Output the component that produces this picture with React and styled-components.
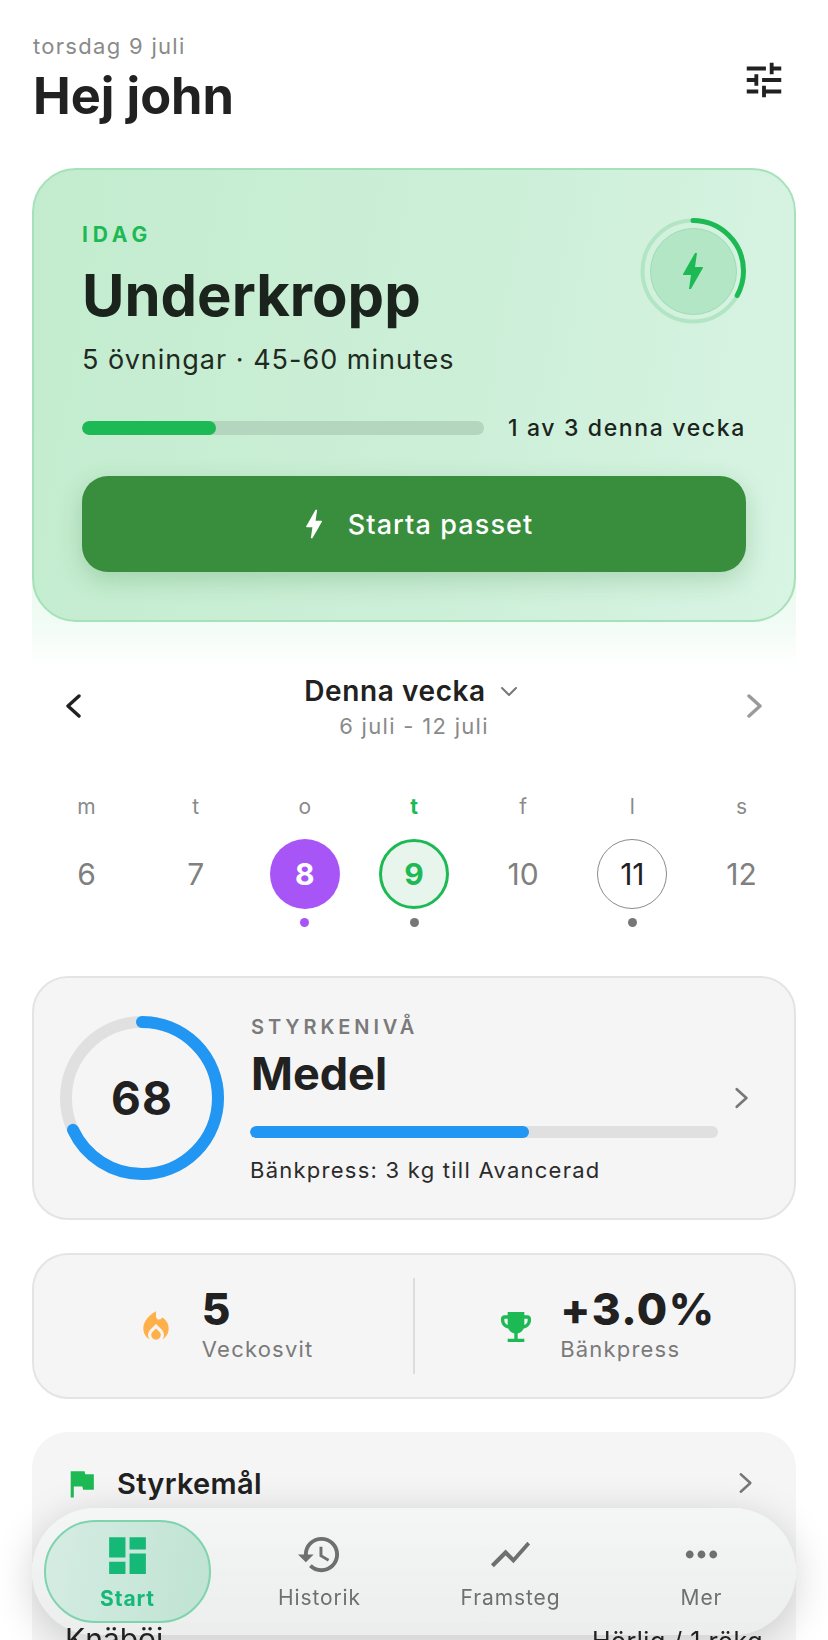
import React from 'react'
import styled, { createGlobalStyle } from 'styled-components'
import {
  MdTune,
  MdBolt,
  MdLocalFireDepartment,
  MdEmojiEvents,
  MdFlag,
  MdDashboard,
  MdHistory,
  MdShowChart,
  MdMoreHoriz,
} from 'react-icons/md'

const GlobalStyle = createGlobalStyle`
  html, body {
    margin: 0;
    padding: 0;
    background: #ffffff;
    font-family: Inter, "Noto Sans", sans-serif;
    color: #212121;
  }
  * {
    box-sizing: border-box;
  }
`

const Screen = styled.div`
  position: relative;
  isolation: isolate;
  width: 828px;
  height: 1640px;
  overflow: hidden;
  background: #ffffff;
`

const Content = styled.div`
  display: flex;
  flex-direction: column;
  padding: 33px 32px 0;
`

const Header = styled.header`
  display: flex;
  justify-content: space-between;
  align-items: flex-start;
  height: 135px;
  padding-left: 1px;
`

const DateLabel = styled.div`
  font-size: 22px;
  line-height: 26px;
  letter-spacing: 1.3px;
  color: #8a8a8a;
`

const Greeting = styled.h1`
  margin: 8px 0 0;
  font-size: 50.5px;
  line-height: 58px;
  font-weight: 700;
  color: #212121;
`

const SettingsButton = styled.div`
  display: flex;
  margin: 24px 9px 0 0;
  font-size: 46px;
  color: #212121;
`

const HeroCard = styled.section`
  position: relative;
  padding: 48px 48px 0;
  height: 454px;
  border: 2px solid #a6e1ba;
  border-radius: 44px;
  background: linear-gradient(100deg, #c3ecce 0%, #ccefd8 55%, #d8f4e3 100%);

  /* soft green glow that fades out under the card */
  &::after {
    content: '';
    position: absolute;
    z-index: -1;
    left: -2px;
    right: -2px;
    bottom: -50px;
    height: 100px;
    background: linear-gradient(180deg, #e9f8ee 0%, #f1fbf5 50%, #ffffff 100%);
  }
`

const HeroTop = styled.div`
  display: flex;
  justify-content: space-between;
  align-items: flex-start;
  height: 155px;
`

const Eyebrow = styled.div`
  margin-top: 5px;
  font-size: 21px;
  line-height: 24px;
  font-weight: 700;
  letter-spacing: 4.8px;
  color: #1db954;
`

const HeroTitle = styled.h2`
  margin: 15px 0 0;
  font-size: 58px;
  line-height: 66px;
  font-weight: 700;
  color: #1a241d;
`

const HeroMeta = styled.div`
  margin-top: 15px;
  font-size: 27px;
  line-height: 34px;
  letter-spacing: 1px;
  color: #1f2a22;
`

const RingBox = styled.div`
  position: relative;
  width: 106px;
  height: 106px;
  display: flex;
  align-items: center;
  justify-content: center;
`

const RingSvg = styled.svg`
  position: absolute;
  inset: 0;
`

const RingCore = styled.div`
  width: 87px;
  height: 87px;
  border-radius: 50%;
  display: flex;
  align-items: center;
  justify-content: center;
  background: #b3e6c4;
  border: 1.5px solid #9fdcb4;
  color: #1db954;
  font-size: 48px;
`

const ProgressRow = styled.div`
  display: flex;
  align-items: center;
  gap: 24px;
  margin-top: 41px;
`

const HeroTrack = styled.div`
  flex: 1;
  height: 14px;
  border-radius: 7px;
  background: #b4d6bf;
  overflow: hidden;
`

const BarFill = styled.div`
  height: 100%;
  border-radius: inherit;
  background: ${p => p.$color};
`

const ProgressText = styled.div`
  font-size: 23px;
  line-height: 28px;
  font-weight: 500;
  letter-spacing: 1.65px;
  color: #1a241d;
  white-space: nowrap;
`

const StartButton = styled.div`
  display: flex;
  align-items: center;
  justify-content: center;
  gap: 15px;
  height: 96px;
  margin-top: 34px;
  border-radius: 26px;
  background: #388e3c;
  color: #ffffff;
  font-size: 27px;
  font-weight: 500;
  letter-spacing: 1.1px;
  box-shadow: 0 8px 24px rgba(46, 125, 50, 0.24);

  svg {
    font-size: 38px;
  }
`

const WeekHead = styled.div`
  display: grid;
  grid-template-columns: 1fr auto 1fr;
  align-items: center;
  margin-top: 51px;
  padding: 0 33px;
`

const ArrowSvg = styled.svg`
  display: block;
  flex: none;
  justify-self: ${p => (p.$right ? 'end' : 'start')};
`

const WeekCenter = styled.div`
  display: flex;
  flex-direction: column;
  align-items: center;
`

const WeekTitle = styled.div`
  display: flex;
  align-items: center;
  gap: 14px;
  margin-right: 6px;
  font-size: 28px;
  line-height: 36px;
  font-weight: 600;
  letter-spacing: 0.6px;
  color: #212121;
`

const WeekRange = styled.div`
  margin-top: 4px;
  font-size: 22px;
  line-height: 26px;
  letter-spacing: 1.3px;
  color: #8a8a8a;
`

const DayGrid = styled.div`
  display: grid;
  grid-template-columns: repeat(7, 109.2px);
  justify-content: center;
  margin-top: 55px;
`

const DayColumn = styled.div`
  display: flex;
  flex-direction: column;
  align-items: center;
`

const DayLetter = styled.div`
  font-size: 21px;
  line-height: 26px;
  font-weight: ${p => (p.$today ? 700 : 400)};
  color: ${p => (p.$today ? '#1db954' : '#8a8a8a')};
`

const DayCircle = styled.div`
  width: 70px;
  height: 70px;
  margin-top: 19px;
  border-radius: 50%;
  display: flex;
  align-items: center;
  justify-content: center;
  font-size: 30px;
  font-weight: ${p => (p.$variant === 'done' || p.$variant === 'today' ? 700 : 400)};
  color: ${p => ({ done: '#ffffff', today: '#1db954', planned: '#212121' }[p.$variant] || '#808080')};
  background: ${p => ({ done: '#a855f7', today: '#e8f5ec' }[p.$variant] || 'transparent')};
  border: ${p =>
    ({ today: '3px solid #1db954', planned: '1.5px solid #8a8a8a' }[p.$variant] || 'none')};
`

const DayDot = styled.div`
  width: 9px;
  height: 9px;
  margin-top: 9px;
  border-radius: 50%;
  background: ${p => p.$color || 'transparent'};
`

const Card = styled.section`
  display: flex;
  align-items: center;
  border: 2px solid #e4e4e4;
  border-radius: 36px;
  background: #f5f5f5;
`

const LevelCard = styled(Card)`
  height: 244px;
  margin-top: 49px;
  padding: 0 45px 0 26px;
`

const ScoreRing = styled.div`
  position: relative;
  flex: none;
  width: 164px;
  height: 164px;
  display: flex;
  align-items: center;
  justify-content: center;
  font-size: 46px;
  font-weight: 700;
  letter-spacing: 1px;
  color: #212121;

  svg {
    position: absolute;
    inset: 0;
  }
`

const LevelInfo = styled.div`
  flex: 1;
  margin-left: 26px;
  margin-right: 17px;
  padding-top: 3px;
  min-width: 0;
`

const LevelLabel = styled.div`
  margin-left: 1px;
  font-size: 20px;
  line-height: 24px;
  font-weight: 600;
  letter-spacing: 3.9px;
  color: #7a7a7a;
`

const LevelName = styled.div`
  margin-top: 8px;
  margin-left: 1px;
  font-size: 45px;
  line-height: 54px;
  font-weight: 700;
  color: #212121;
`

const LevelTrack = styled.div`
  height: 12px;
  margin-top: 25px;
  border-radius: 6px;
  background: #e0e0e0;
  overflow: hidden;
`

const LevelNote = styled.div`
  margin-top: 18px;
  font-size: 22px;
  line-height: 28px;
  letter-spacing: 1.25px;
  color: #2b2b2b;
`

const StatsCard = styled(Card)`
  height: 146px;
  margin-top: 33px;
`

const StatCell = styled.div`
  flex: 1;
  display: flex;
  align-items: center;
  justify-content: center;
  gap: ${p => p.$gap}px;
  margin-left: ${p => p.$shift}px;
`

const StatIcon = styled.div`
  display: flex;
  margin-top: 2px;
  font-size: ${p => p.$size}px;
  color: ${p => p.$color};
`

const StatText = styled.div`
  padding-bottom: 5px;
`

const StatValue = styled.div`
  font-size: 44px;
  line-height: 50px;
  font-weight: 800;
  letter-spacing: 1.5px;
  color: #212121;
`

const StatLabel = styled.div`
  margin-top: 1px;
  font-size: 22px;
  line-height: 28px;
  letter-spacing: 1.2px;
  color: #7a7a7a;
`

const StatDivider = styled.div`
  flex: none;
  width: 1.5px;
  height: 96px;
  background: #dcdcdc;
`

const GoalsCard = styled.section`
  height: 260px;
  margin-top: 33px;
  padding: 0 33px;
  border-radius: 36px;
  background: #f5f5f5;
`

const GoalsHead = styled.div`
  display: flex;
  align-items: center;
  height: 102px;
  color: #212121;
  font-size: 29px;
  font-weight: 600;
  letter-spacing: 0.3px;

  svg.flag {
    font-size: 37px;
    color: #1db954;
    margin-right: 17px;
    margin-left: -2px;
  }
`

const GoalsChevron = styled.div`
  margin-left: auto;
  display: flex;
  margin-right: 10px;
`

// sits above the nav bar so the first row peeks out along its bottom edge
const GoalRow = styled.div`
  position: relative;
  z-index: 1;
  display: flex;
  justify-content: space-between;
  align-items: baseline;
  margin-top: 88px;
  font-size: 30px;
  line-height: 34px;
  color: #212121;
`

const GoalRange = styled.span`
  font-size: 25px;
  letter-spacing: 0.5px;
  white-space: nowrap;
`

const NavBar = styled.nav`
  position: absolute;
  left: 32px;
  top: 1508px;
  width: 764px;
  height: 127px;
  display: grid;
  grid-template-columns: 180px repeat(3, 191px);
  padding: 12px 0 12px 12px;
  border-radius: 64px;
  background: linear-gradient(180deg, rgba(244, 245, 245, 0.96), rgba(235, 238, 237, 0.98));
  backdrop-filter: blur(16px);
  box-shadow: 0 8px 40px rgba(0, 0, 0, 0.18);
`

const NavItem = styled.div`
  display: flex;
  flex-direction: column;
  align-items: center;
  justify-content: flex-start;
  padding-top: ${p => (p.$active ? 10 : 11)}px;
  width: ${p => (p.$active ? '167px' : 'auto')};
  border-radius: 52px;
  border: ${p => (p.$active ? '2px solid #7fd4ae' : 'none')};
  background: ${p => (p.$active ? 'linear-gradient(100deg, #d6ece3, #bfe3d3)' : 'transparent')};
  color: ${p => (p.$active ? '#16b877' : '#6f6f6f')};
`

const NavIcon = styled.div`
  display: flex;
  font-size: ${p => (p.$active ? 49 : 47)}px;
  height: 46px;
  align-items: center;
`

const NavLabel = styled.div`
  margin-top: 8px;
  font-size: 21px;
  line-height: 26px;
  letter-spacing: 0.9px;
  font-weight: ${p => (p.$active ? 700 : 400)};
`

const Chevron = ({ left, color, w = 16, h = 24, sw = 3.4, ...rest }) => (
  <ArrowSvg width={w} height={h} viewBox="0 0 16 24" fill="none" {...rest}>
    <path
      d={left ? 'M14 2 L3 12 L14 22' : 'M2 2 L13 12 L2 22'}
      stroke={color}
      strokeWidth={sw}
      strokeLinecap="round"
      strokeLinejoin="round"
    />
  </ArrowSvg>
)

const days = [
  { letter: 'm', num: 6 },
  { letter: 't', num: 7 },
  { letter: 'o', num: 8, variant: 'done', dot: '#a855f7' },
  { letter: 't', num: 9, variant: 'today', dot: '#777777', today: true },
  { letter: 'f', num: 10 },
  { letter: 'l', num: 11, variant: 'planned', dot: '#777777' },
  { letter: 's', num: 12 },
]

const navItems = [
  { label: 'Start', Icon: MdDashboard, active: true },
  { label: 'Historik', Icon: MdHistory },
  { label: 'Framsteg', Icon: MdShowChart },
  { label: 'Mer', Icon: MdMoreHoriz },
]

const HERO_R = 50.5
const SCORE_R = 76

const App = () => {
  const heroLen = 2 * Math.PI * HERO_R
  const scoreLen = 2 * Math.PI * SCORE_R

  return (
    <Screen>
      <GlobalStyle />
      <Content>
        <Header>
          <div>
            <DateLabel>torsdag 9 juli</DateLabel>
            <Greeting>Hej john</Greeting>
          </div>
          <SettingsButton><MdTune /></SettingsButton>
        </Header>

        <HeroCard>
          <HeroTop>
            <div>
              <Eyebrow>IDAG</Eyebrow>
              <HeroTitle>Underkropp</HeroTitle>
              <HeroMeta>5 övningar · 45-60 minutes</HeroMeta>
            </div>
            <RingBox>
              <RingSvg width="106" height="106" viewBox="0 0 106 106" fill="none">
                <circle cx="53" cy="53" r={HERO_R} stroke="#b2e5c3" strokeWidth="4" />
                <circle
                  cx="53"
                  cy="53"
                  r={HERO_R}
                  stroke="#1db954"
                  strokeWidth="5"
                  strokeLinecap="round"
                  strokeDasharray={`${heroLen * 0.33} ${heroLen}`}
                  transform="rotate(-90 53 53)"
                />
              </RingSvg>
              <RingCore><MdBolt /></RingCore>
            </RingBox>
          </HeroTop>

          <ProgressRow>
            <HeroTrack>
              <BarFill $color="#1db954" style={{ width: '33.3%' }} />
            </HeroTrack>
            <ProgressText>1 av 3 denna vecka</ProgressText>
          </ProgressRow>

          <StartButton>
            <MdBolt />
            Starta passet
          </StartButton>
        </HeroCard>

        <WeekHead>
          <Chevron left color="#212121" />
          <WeekCenter>
            <WeekTitle>
              Denna vecka
              <svg width="18" height="11" viewBox="0 0 18 11" fill="none">
                <path d="M2 2 L9 9 L16 2" stroke="#777" strokeWidth="2" strokeLinecap="round" strokeLinejoin="round" />
              </svg>
            </WeekTitle>
            <WeekRange>6 juli - 12 juli</WeekRange>
          </WeekCenter>
          <Chevron $right color="#9a9a9a" />
        </WeekHead>

        <DayGrid>
          {days.map(day => (
            <DayColumn key={day.num}>
              <DayLetter $today={day.today}>{day.letter}</DayLetter>
              <DayCircle $variant={day.variant}>{day.num}</DayCircle>
              <DayDot $color={day.dot} />
            </DayColumn>
          ))}
        </DayGrid>

        <LevelCard>
          <ScoreRing>
            <svg width="164" height="164" viewBox="0 0 164 164" fill="none">
              <circle cx="82" cy="82" r={SCORE_R} stroke="#e0e0e0" strokeWidth="12" />
              <circle
                cx="82"
                cy="82"
                r={SCORE_R}
                stroke="#2196f3"
                strokeWidth="12"
                strokeLinecap="round"
                strokeDasharray={`${scoreLen * 0.68} ${scoreLen}`}
                transform="rotate(-90 82 82)"
              />
            </svg>
            68
          </ScoreRing>
          <LevelInfo>
            <LevelLabel>STYRKENIVÅ</LevelLabel>
            <LevelName>Medel</LevelName>
            <LevelTrack>
              <BarFill $color="#2196f3" style={{ width: '59.6%' }} />
            </LevelTrack>
            <LevelNote>Bänkpress: 3 kg till Avancerad</LevelNote>
          </LevelInfo>
          <Chevron color="#777777" w={14} h={22} sw={3} />
        </LevelCard>

        <StatsCard>
          <StatCell $gap={27} $shift={3}>
            <StatIcon $size={38} $color="#ffb04a"><MdLocalFireDepartment /></StatIcon>
            <StatText>
              <StatValue>5</StatValue>
              <StatLabel>Veckosvit</StatLabel>
            </StatText>
          </StatCell>
          <StatDivider />
          <StatCell $gap={24} $shift={3}>
            <StatIcon $size={40} $color="#1db954"><MdEmojiEvents /></StatIcon>
            <StatText>
              <StatValue>+3.0%</StatValue>
              <StatLabel>Bänkpress</StatLabel>
            </StatText>
          </StatCell>
        </StatsCard>

        <GoalsCard>
          <GoalsHead>
            <MdFlag className="flag" />
            Styrkemål
            <GoalsChevron><Chevron color="#777777" w={14} h={22} sw={2.8} /></GoalsChevron>
          </GoalsHead>
          <GoalRow>
            <span>Knäböj</span>
            <GoalRange>Hörlig / 1 rökg</GoalRange>
          </GoalRow>
        </GoalsCard>
      </Content>

      <NavBar>
        {navItems.map(({ label, Icon, active }) => (
          <NavItem key={label} $active={active}>
            <NavIcon $active={active}><Icon /></NavIcon>
            <NavLabel $active={active}>{label}</NavLabel>
          </NavItem>
        ))}
      </NavBar>
    </Screen>
  )
}

export default App
